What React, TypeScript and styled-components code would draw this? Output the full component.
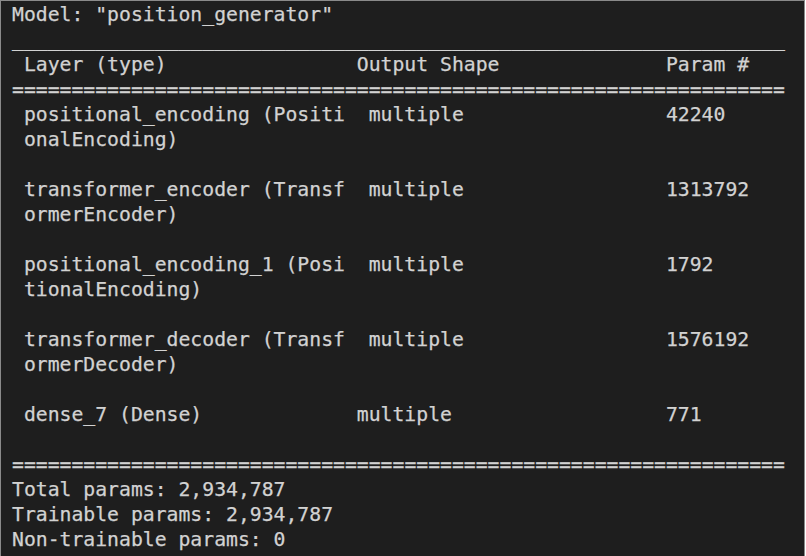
import styled, { createGlobalStyle } from 'styled-components';

const GlobalStyle = createGlobalStyle`
  html, body {
    margin: 0;
    padding: 0;
    background: #ffffff;
  }
`;

const Screen = styled.div`
  width: 805px;
  height: 556px;
  box-sizing: border-box;
  background-color: #1e1e1e;
  border: 1px solid #8a8a8a;
  border-bottom: none;
  padding: 1px 0 0 11px;
  font-family: "DejaVu Sans Mono", "Liberation Mono", monospace;
  font-size: 19.75px;
  line-height: 25px;
  color: #d2d2d2;
  -webkit-text-stroke: 0.25px #d2d2d2;
  overflow: hidden;
`;

const Line = styled.div`
  white-space: pre;
  height: 25px;
`;

const Rule = styled.div<{ $char: string }>`
  white-space: pre;
  height: 25px;
  &::before {
    content: '${(p) => p.$char.repeat(65)}';
  }
`;

const Row = styled.div`
  display: grid;
  grid-template-columns: 29ch 26ch 10ch;
  white-space: pre;
  height: 25px;
`;

const Cell = styled.span<{ $indent?: boolean }>`
  padding-left: ${(p) => (p.$indent ? '1ch' : '0')};
`;

interface Layer {
  name: string;
  rest?: string;
  shape: string;
  params: string;
  wrapped: boolean;
}

const layers: Layer[] = [
  { name: 'positional_encoding (Positi', rest: 'onalEncoding)', shape: 'multiple', params: '42240', wrapped: true },
  { name: 'transformer_encoder (Transf', rest: 'ormerEncoder)', shape: 'multiple', params: '1313792', wrapped: true },
  { name: 'positional_encoding_1 (Posi', rest: 'tionalEncoding)', shape: 'multiple', params: '1792', wrapped: true },
  { name: 'transformer_decoder (Transf', rest: 'ormerDecoder)', shape: 'multiple', params: '1576192', wrapped: true },
  { name: 'dense_7 (Dense)', shape: 'multiple', params: '771', wrapped: false },
];

export default function App() {
  return (
    <>
      <GlobalStyle />
      <Screen>
        <Line>Model: "position_generator"</Line>
        <Rule $char="_" />
        <Row>
          <Cell> Layer (type)</Cell>
          <Cell>Output Shape</Cell>
          <Cell>Param #</Cell>
        </Row>
        <Rule $char="=" />
        {layers.map((layer) => (
          <div key={layer.name}>
            <Row>
              <Cell> {layer.name}</Cell>
              <Cell $indent={layer.wrapped}>{layer.shape}</Cell>
              <Cell>{layer.params}</Cell>
            </Row>
            {layer.rest && <Line> {layer.rest}</Line>}
            <Line> </Line>
          </div>
        ))}
        <Rule $char="=" />
        <Line>Total params: 2,934,787</Line>
        <Line>Trainable params: 2,934,787</Line>
        <Line>Non-trainable params: 0</Line>
      </Screen>
    </>
  );
}
